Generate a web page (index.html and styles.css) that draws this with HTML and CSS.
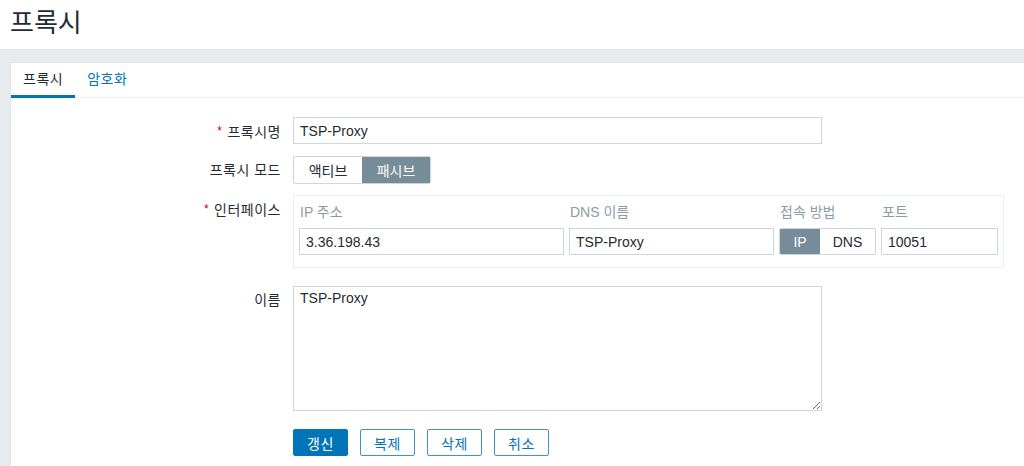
FILE: index.html
```html
<!DOCTYPE html>
<html lang="ko">
<head>
  <meta charset="UTF-8">
  <title>프록시</title>
  <link rel="stylesheet" href="styles.css">
</head>
<body>
  <header class="page-header">
    <h1>프록시</h1>
  </header>

  <main class="wrapper">
    <div class="container">
      <ul class="tabs">
        <li class="tab active">프록시</li>
        <li class="tab">암호화</li>
      </ul>

      <form class="form">
        <!-- 프록시명 -->
        <div class="form-row">
          <label class="label required">프록시명</label>
          <div class="field">
            <input type="text" class="input wide" value="TSP-Proxy">
          </div>
        </div>

        <!-- 프록시 모드 -->
        <div class="form-row mode-row">
          <label class="label">프록시 모드</label>
          <div class="field">
            <div class="segment">
              <span class="seg-item mode">액티브</span>
              <span class="seg-item mode selected">패시브</span>
            </div>
          </div>
        </div>

        <!-- 인터페이스 -->
        <div class="form-row iface-row">
          <label class="label required">인터페이스</label>
          <div class="field">
            <div class="iface">
              <div class="iface-head">IP 주소</div>
              <div class="iface-head">DNS 이름</div>
              <div class="iface-head">접속 방법</div>
              <div class="iface-head">포트</div>
              <input type="text" class="input" value="3.36.198.43">
              <input type="text" class="input" value="TSP-Proxy">
              <div class="segment full">
                <span class="seg-item ip selected">IP</span>
                <span class="seg-item dns">DNS</span>
              </div>
              <input type="text" class="input" value="10051">
            </div>
          </div>
        </div>

        <!-- 이름 -->
        <div class="form-row">
          <label class="label">이름</label>
          <div class="field">
            <textarea class="input wide textarea">TSP-Proxy</textarea>
          </div>
        </div>

        <div class="buttons">
          <button type="button" class="btn primary">갱신</button>
          <button type="button" class="btn">복제</button>
          <button type="button" class="btn">삭제</button>
          <button type="button" class="btn">취소</button>
        </div>
      </form>
    </div>
  </main>
</body>
</html>
```

FILE: styles.css
```css
* {
  box-sizing: border-box;
}
body {
  margin: 0;
  font-family: "Liberation Sans", "Noto Sans CJK KR", sans-serif;
  font-size: 14px;
  color: #1f2c33;
  background: #e8ebee;
  height: 466px;
  overflow: hidden;
}
.page-header {
  background: white;
  height: 50px;
  padding: 0 10px;
  border-bottom: 1px solid #dfe4e7;
}
.page-header h1 {
  margin: 0;
  font-size: 26px;
  font-weight: normal;
  line-height: 46px;
}
.wrapper {
  padding: 12px 0 0 10px;
}
.container {
  background: white;
  border: 1px solid #dfe4e7;
  border-right: none;
  min-height: 420px;
}
.tabs {
  list-style: none;
  margin: 0;
  padding: 0;
  display: flex;
  border-bottom: 1px solid #ebeef0;
  height: 35px;
}
.tab {
  padding: 0 12px;
  line-height: 32px;
  color: #0275b8;
  border-bottom: 3px solid transparent;
  height: 35px;
  letter-spacing: 0.5px;
}
.tab.active {
  color: #1f2c33;
  border-bottom-color: #0275b8;
}
.form {
  padding-top: 19px;
}
.form-row {
  display: flex;
  gap: 12px;
  margin-bottom: 12px;
}
.mode-row {
  margin-bottom: 11px;
}
.iface-row {
  margin-bottom: 18px;
}
.label {
  width: 270px;
  flex-shrink: 0;
  text-align: right;
  padding-top: 5px;
  line-height: 18px;
  letter-spacing: 0.5px;
}
.required::before {
  content: "*";
  color: #d40000;
  font-size: 12px;
  margin-right: 5px;
  vertical-align: 2px;
}
.input {
  font-family: inherit;
  font-size: 14px;
  color: #1f2c33;
  height: 27px;
  padding: 0 6px;
  border: 1px solid #cfd6da;
  border-radius: 0;
  background: white;
  outline: none;
}
.input.wide {
  width: 529px;
}
.textarea {
  height: 125px;
  padding: 3px 6px;
  resize: vertical;
  display: block;
}
.segment {
  display: inline-flex;
  border: 1px solid #cfd6da;
  border-radius: 2px;
  height: 28px;
  overflow: hidden;
}
.iface .segment {
  height: 27px;
}
.seg-item {
  display: flex;
  align-items: center;
  justify-content: center;
  color: #1f2c33;
}
.seg-item.selected {
  background: #768d99;
  color: white;
}
.mode {
  width: 68px;
}
.segment.full {
  width: 97px;
}
.ip {
  width: 40px;
}
.dns {
  flex: 1;
}
.iface {
  display: grid;
  grid-template-columns: 265px 205px 97px 117px;
  column-gap: 5px;
  row-gap: 6px;
  border: 1px solid #ebeef0;
  padding: 6px 6px 12px 5px;
  width: 711px;
}
.iface-head {
  color: #8a9ca6;
  line-height: 20px;
  padding-left: 1px;
}
.buttons {
  display: flex;
  gap: 12px;
  padding-left: 282px;
  margin-top: 18px;
}
.btn {
  font-family: inherit;
  font-size: 14px;
  height: 27px;
  width: 55px;
  background: white;
  color: #0275b8;
  border: 1px solid #3f93cb;
  border-radius: 2px;
  padding: 0;
  letter-spacing: 0.5px;
}
.btn.primary {
  background: #0275b8;
  border-color: #0275b8;
  color: white;
}
```
